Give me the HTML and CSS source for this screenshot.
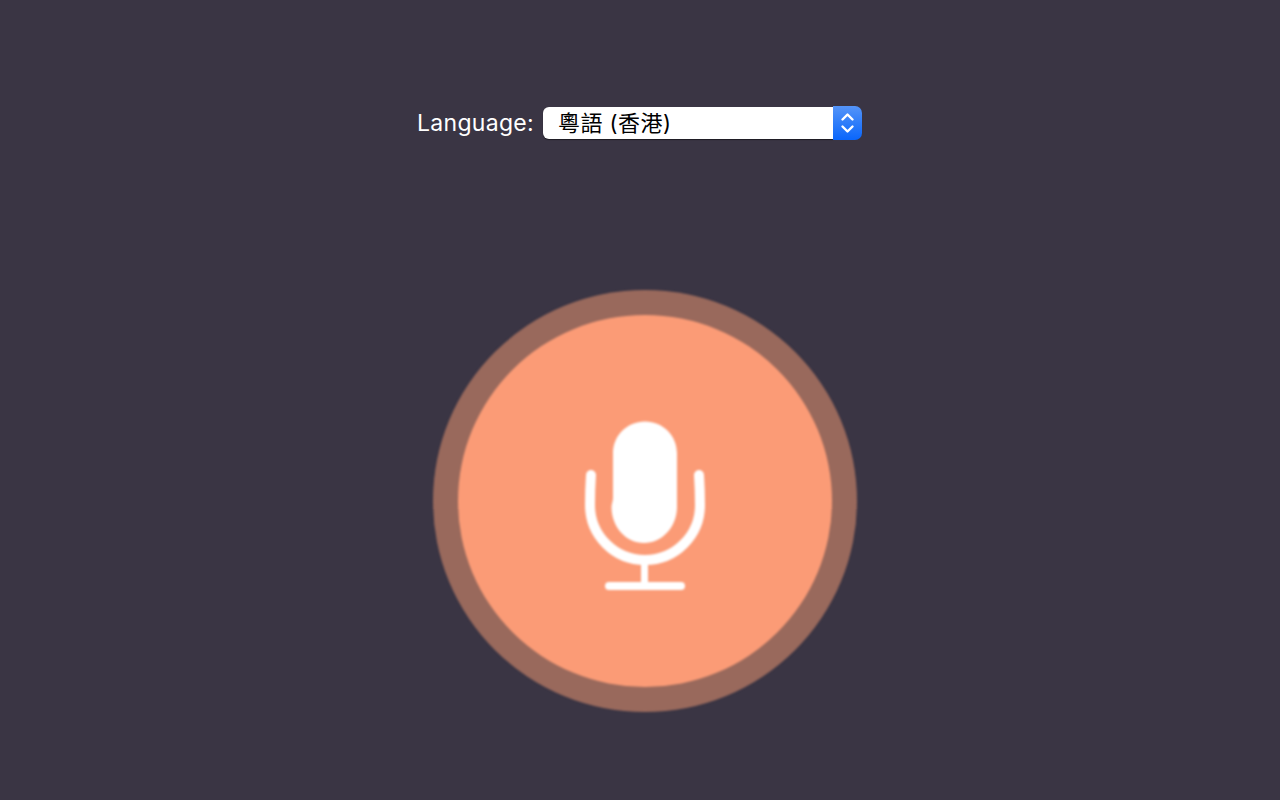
FILE: index.html
```html
<!doctype html>
<html lang="zh-Hant">
  <head>
    <meta charset="UTF-8" />
    <meta name="viewport" content="width=device-width, initial-scale=1.0" />
    <title>Voice input</title>
    <link rel="stylesheet" href="styles.css">
  </head>
  <body>
    <main class="page">
      <div class="language-row">
        <label class="language-label" for="language">Language:</label>
        <div class="select-box">
          <select class="language-select" id="language">
            <option>粵語 (香港)</option>
          </select>
          <span class="select-stepper">
            <svg width="29" height="34" viewBox="0 0 29 34" fill="none" stroke="#fff" stroke-width="2.4" stroke-linecap="round" stroke-linejoin="round">
              <path d="m9.500 13.500 5-5 5 5" />
              <path d="m9.500 20.500 5 5 5-5" />
            </svg>
          </span>
        </div>
      </div>

      <div class="mic-ring">
        <button class="mic-button" aria-label="Start recording">
          <svg class="mic-icon" width="124" height="174" viewBox="583 419 124 174" fill="none" stroke="#fff" stroke-linecap="round">
            <path d="M645 421.500c18 0 32 14 32 32V507c0 20-15 36-33 36s-32.500-16-32.500-36c0-3 1.500-6 1.500-9v-44.500c0-18 14-32 32-32z" fill="#fff" stroke="none" />
            <path d="M591 475q-1 15-1 30a55 55 0 0 0 110 0q0-15-1-30" stroke-width="10" />
            <path d="M644.500 560v25" stroke-width="7" stroke-linecap="butt" />
            <path d="M609 586h72" stroke-width="8" />
          </svg>
        </button>
      </div>
    </main>
  </body>
</html>
```

FILE: styles.css
```css
body {
  margin: 0;
  background: #3a3544;
  font-family: Inter, "Noto Sans CJK TC", sans-serif;
}

.page {
  min-height: 800px;
  box-sizing: border-box;
  padding: 106px 0 0 10px;
  display: flex;
  flex-direction: column;
  align-items: center;
  gap: 150px;
}

.language-row {
  display: flex;
  align-items: center;
  gap: 9px;
  margin-right: 11px;
}

.language-label {
  color: #fff;
  font-size: 23px;
  letter-spacing: 0.3px;
}

.select-box {
  display: flex;
  align-items: center;
  width: 319px;
  height: 34px;
}

.language-select {
  appearance: none;
  flex: 1;
  height: 32px;
  min-width: 0;
  border: none;
  border-radius: 6px 0 0 6px;
  padding: 0 0 0 15px;
  background: #fff;
  color: #000;
  font-family: Inter, "Noto Sans CJK TC", sans-serif;
  font-size: 22px;
  letter-spacing: 0.45px;
  box-shadow: 0 1px 1px rgba(0, 0, 0, 0.5);
}

.select-stepper {
  display: flex;
  width: 29px;
  height: 34px;
  border-radius: 0 7px 7px 0;
  background: linear-gradient(180deg, #5494f8 0%, #0a66fb 100%);
}

.mic-ring {
  width: 424px;
  height: 422px;
  border-radius: 50%;
  background: #99695c;
  display: flex;
  align-items: center;
  justify-content: center;
  filter: blur(1px);
}

.mic-button {
  width: 374px;
  height: 372px;
  padding: 0;
  border: none;
  border-radius: 50%;
  background: #fb9b76;
  display: flex;
  align-items: center;
  justify-content: center;
}

.mic-icon {
  margin-top: 10px;
}
```
